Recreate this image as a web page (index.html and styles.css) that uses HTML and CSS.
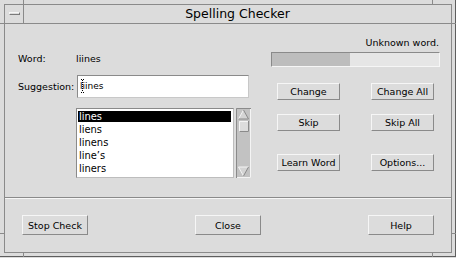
FILE: index.html
```html
<!DOCTYPE html>
<html lang="en">

<head>
    <meta charset="UTF-8">
    <meta name="viewport" content="width=device-width, initial-scale=1.0">
    <title>Spelling Checker</title>

    <link rel="stylesheet" href="styles.css">
</head>

<body>
    <div class="frame">
        <span class="tick tick-v tl"></span>
        <span class="tick tick-h lt"></span>
        <span class="tick tick-v tr"></span>
        <span class="tick tick-h rt"></span>
        <span class="tick tick-v bl"></span>
        <span class="tick tick-h lb"></span>
        <span class="tick tick-v br"></span>
        <span class="tick tick-h rb"></span>

        <div class="window">
            <header class="titlebar">
                <div class="menu-btn"><span></span></div>
                <h1>Spelling Checker</h1>
            </header>

            <main class="content">
                <section class="left">
                    <div class="word-row">
                        <span class="label">Word:</span>
                        <span>liines</span>
                    </div>
                    <div class="sugg-row">
                        <span class="label">Suggestion:</span>
                        <div class="field">
                            <svg class="caret" width="4" height="14" viewBox="0 0 4 14">
                                <rect x="0" y="0" width="1" height="1" fill="#000" />
                                <rect x="2" y="0" width="1" height="1" fill="#000" />
                                <rect x="1" y="1" width="1" height="1" fill="#000" />
                                <rect x="1" y="3" width="1" height="1" fill="#000" />
                                <rect x="1" y="5" width="1" height="1" fill="#000" />
                                <rect x="1" y="7" width="1" height="1" fill="#000" />
                                <rect x="1" y="9" width="1" height="1" fill="#000" />
                                <rect x="1" y="11" width="1" height="1" fill="#000" />
                                <rect x="0" y="13" width="1" height="1" fill="#000" />
                                <rect x="2" y="13" width="1" height="1" fill="#000" />
                            </svg>
                            liines
                        </div>
                    </div>
                    <div class="list-row">
                        <ul class="list">
                            <li class="selected">lines</li>
                            <li>liens</li>
                            <li>linens</li>
                            <li>line’s</li>
                            <li>liners</li>
                        </ul>
                        <svg class="scrollbar" width="15" height="70" viewBox="0 0 15 70">
                            <rect x="0" y="0" width="15" height="70" fill="#c2c2c2" />
                            <path d="M0.5 70 V0.5 H15" stroke="#8a8a8a" fill="none" />
                            <path d="M1 69.5 H14.5 V1" stroke="#f4f4f4" fill="none" />
                            <polygon points="7.5,2 2.5,11 12.5,11" fill="#d4d4d4" />
                            <path d="M2.5 11 L7.5 2" stroke="#f4f4f4" fill="none" />
                            <path d="M7.5 2 L12.5 11 H2.5" stroke="#8a8a8a" fill="none" />
                            <rect x="3" y="13" width="10" height="11" fill="#dcdcdc" />
                            <path d="M3.5 24 V13.5 H13" stroke="#f4f4f4" fill="none" />
                            <path d="M3.5 23.5 H12.5 V13" stroke="#8a8a8a" fill="none" />
                            <polygon points="2.5,59 12.5,59 7.5,68" fill="#d4d4d4" />
                            <path d="M12.5 59 H2.5 L7.5 68" stroke="#f4f4f4" fill="none" />
                            <path d="M7.5 68 L12.5 59" stroke="#8a8a8a" fill="none" />
                        </svg>
                    </div>
                </section>

                <section class="right">
                    <p class="status">Unknown word.</p>
                    <div class="progress">
                        <div class="fill" style="width: 47%"></div>
                    </div>
                    <div class="actions">
                        <div class="row">
                            <a href="#" class="btn">Change</a>
                            <a href="#" class="btn">Change All</a>
                        </div>
                        <div class="row">
                            <a href="#" class="btn">Skip</a>
                            <a href="#" class="btn">Skip All</a>
                        </div>
                        <div class="row">
                            <a href="#" class="btn">Learn Word</a>
                            <a href="#" class="btn">Options...</a>
                        </div>
                    </div>
                </section>
            </main>

            <footer class="footer">
                <a href="#" class="btn">Stop Check</a>
                <a href="#" class="btn">Close</a>
                <a href="#" class="btn">Help</a>
            </footer>
        </div>
    </div>
</body>

</html>
```

FILE: styles.css
```css
* {
    padding: 0;
    margin: 0;
    box-sizing: border-box;
    font-family: "DejaVu Sans", Verdana, sans-serif;
}

body {
    width: 456px;
    height: 258px;
    overflow: hidden;
    background-color: #dcdcdc;
    color: #000;
    font-size: 9.5px;
}

a {
    text-decoration: none;
    color: #000;
}

ul {
    list-style: none;
}

.frame {
    position: relative;
    width: 456px;
    height: 257px;
    padding: 4px 3px 3px 4px;
    border-right: 1px solid #5e5e5e;
    border-bottom: 1px solid #5e5e5e;
}

/* resize handle marks on the frame */
.tick {
    position: absolute;
    background-color: #8a8a8a;
}

.tick-v {
    width: 1px;
    height: 4px;
}

.tick-h {
    width: 4px;
    height: 1px;
}

.tl { left: 23px; top: 0; }
.tr { left: 432px; top: 0; }
.bl { left: 23px; top: 253px; }
.br { left: 432px; top: 253px; }
.lt { left: 0; top: 23px; }
.rt { left: 452px; top: 23px; }
.lb { left: 0; top: 233px; }
.rb { left: 452px; top: 233px; }

.window {
    width: 100%;
    height: 100%;
    border: 1px solid #8a8a8a;
    display: flex;
    flex-direction: column;
}

.titlebar {
    height: 19px;
    display: flex;
    border-bottom: 1px solid #8a8a8a;
}

.menu-btn {
    width: 19px;
    border-right: 1px solid #8a8a8a;
    padding: 7px 0 0 4px;
}

.menu-btn>span {
    display: block;
    width: 11px;
    height: 3px;
    border: 1px solid;
    border-color: #f6f6f6 #7a7a7a #7a7a7a #f6f6f6;
}

.titlebar>h1 {
    flex: 1;
    text-align: center;
    font-size: 12.5px;
    font-weight: normal;
    line-height: 18px;
}

.content {
    height: 173px;
    display: flex;
}

.left {
    width: 246px;
    padding-left: 13px;
}

.label {
    display: block;
    width: 58px;
    flex-shrink: 0;
}

.word-row {
    display: flex;
    margin-top: 28px;
    line-height: 13px;
}

.sugg-row {
    display: flex;
    align-items: center;
    margin-top: 10px;
    height: 23px;
}

.field {
    position: relative;
    width: 172px;
    height: 23px;
    margin-left: 1px;
    padding-left: 2px;
    background-color: #fff;
    border: 1px solid;
    border-color: #8a8a8a #c8c8c8 #c8c8c8 #8a8a8a;
    font-size: 9px;
    line-height: 21px;
}

.caret {
    position: absolute;
    left: 3px;
    top: 3px;
}

.list-row {
    display: flex;
    gap: 2px;
    margin-top: 10px;
    margin-left: 58px;
    height: 70px;
}

.list {
    width: 158px;
    height: 70px;
    padding: 2px 2px 0 1px;
    background-color: #fff;
    border: 1px solid;
    border-color: #8a8a8a #bdbdbd #bdbdbd #8a8a8a;
}

.list>li {
    height: 11px;
    margin-bottom: 2px;
    padding-left: 1px;
    font-family: "DejaVu Sans Condensed", "DejaVu Sans", sans-serif;
    font-size: 11px;
    line-height: 11px;
}

.list>.selected {
    background-color: #000;
    color: #fff;
}

.right {
    width: 169px;
    margin-left: 20px;
}

.status {
    margin-top: 12px;
    padding-right: 1px;
    text-align: right;
    line-height: 13px;
}

.progress {
    margin-top: 3px;
    height: 15px;
    background-color: #e6e6e6;
    border: 1px solid;
    border-color: #8a8a8a #f6f6f6 #f6f6f6 #8a8a8a;
}

.progress>.fill {
    height: 100%;
    background-color: #bdbdbd;
}

.actions>.row {
    display: flex;
    gap: 31px;
    padding-left: 6px;
    margin-top: 14px;
}

.actions>.row:first-child {
    margin-top: 16px;
}

.actions>.row:last-child {
    margin-top: 23px;
}

.btn {
    display: flex;
    align-items: center;
    justify-content: center;
    background-color: #dcdcdc;
    border: 1px solid;
    border-color: #f6f6f6 #8a8a8a #8a8a8a #f6f6f6;
}

.actions .btn {
    width: 63px;
    height: 17px;
}

.footer {
    height: 55px;
    display: flex;
    justify-content: space-between;
    align-items: flex-start;
    padding: 17px 17px 0 17px;
    border-top: 1px solid #8a8a8a;
    box-shadow: inset 0 1px 0 #f6f6f6;
}

.footer>.btn {
    width: 66px;
    height: 20px;
}
```
